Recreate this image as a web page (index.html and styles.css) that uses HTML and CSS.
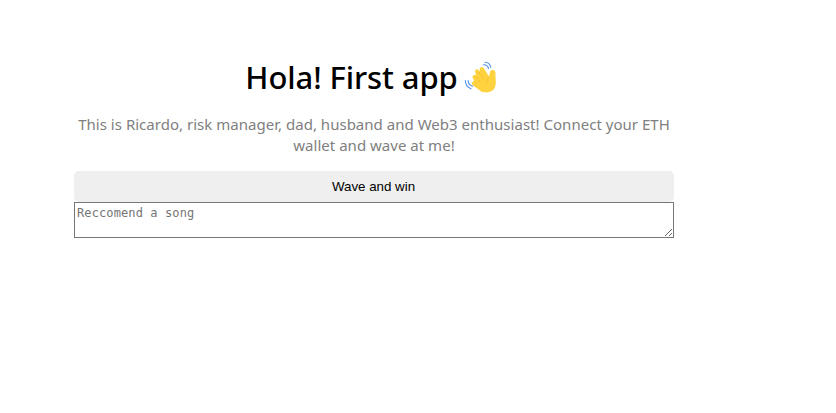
FILE: index.html
```html
<!DOCTYPE html>
<html lang="en">
<head>
<meta charset="utf-8">
<title>Hola! First app</title>
<link rel="stylesheet" href="styles.css">
</head>
<body>
<main class="container">
  <h1 class="header"><span class="title">Hola! First app</span>
    <svg class="wave" viewBox="0 0 34 34" aria-hidden="true">
      <path d="M10 22.500 19 29M10.700 16 18 25M13 10.500 21 21M17.800 8.300 24 18" fill="none" stroke="#ffd23f" stroke-width="4.400" stroke-linecap="round"/>
      <path d="M12 13 17 9 24.800 16.500c.6-2 .8-3.700 1.300-5.600.7-2.700 5.300-2.400 5.300.6 0 2.400.1 4.600.3 7.200.5 5.200-.5 9.200-4.100 11.400-4.300 2.600-9 1.300-12.300-2L9 22z" fill="#ffd23f"/>
      <path d="m14.800 11.400 4.700 6.200M11.900 16l4.400 5.100M24.800 16.700c-2.200 1.600-2.900 3.700-2.300 6" fill="none" stroke="#f5b92e" stroke-width=".7" stroke-linecap="round"/>
      <path d="M19.500 3.800c2.600-.1 4.400 1.300 5.100 3.700M21 1.300c3.100.1 5.100 2 5.700 5M4.100 19.500c.1 2.900 1.900 4.900 4.500 5.800M1.300 19.500c.1 4 2.300 6.900 5.700 8.200" fill="none" stroke="#508de8" stroke-width="1.100" stroke-linecap="round"/>
    </svg>
  </h1>
  <p class="bio">This is Ricardo, risk manager, dad, husband and Web3 enthusiast! Connect your ETH<br><span class="bio-end">wallet and wave at me!</span></p>
  <button class="wave-button">Wave and win</button>
  <textarea class="song" placeholder="Reccomend a song"></textarea>
</main>
</body>
</html>
```
FILE: styles.css
```css
body {
  margin: 0;
  background: #fff;
  font-family: "Segoe UI", "Noto Sans", sans-serif;
}
.container {
  display: flex;
  flex-direction: column;
  width: 600px;
  margin: 56px 0 0 74px;
}
.header {
  display: flex;
  justify-content: center;
  align-items: center;
  gap: 6px;
  height: 43px;
  margin: 0;
  padding-right: 5px;
  font-size: 32px;
  font-weight: 600;
  line-height: 43px;
  white-space: nowrap;
}
.title {
  font-size: 31px;
  font-weight: 500;
  letter-spacing: -0.1px;
}
.wave {
  width: 34px;
  height: 34px;
}
.bio {
  margin: 15px 0 0;
  color: gray;
  font-size: 15px;
  line-height: 21px;
  letter-spacing: 0.02px;
  text-align: center;
  white-space: nowrap;
}
.wave-button {
  height: 31px;
  margin: 15px 0 0;
  padding: 8px 9px 8px 8px;
  border: 0;
  border-radius: 5px;
  background: #efefef;
  color: #000;
  font: 13.333px "Liberation Sans", sans-serif;
}
.song {
  box-sizing: border-box;
  width: 600px;
  height: 36px;
  margin: 0;
  padding: 2px;
  border: 1px solid #767676;
  border-radius: 0;
  font: 12px/16px "DejaVu Sans Mono", monospace;
  letter-spacing: 0.11px;
}
.song::placeholder {
  color: #757575;
}
```
